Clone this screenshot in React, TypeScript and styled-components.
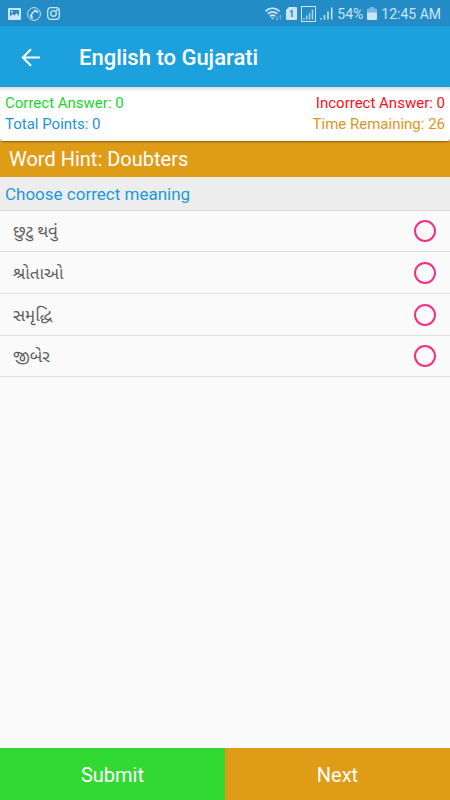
import React, { useState } from "react";
import styled, { createGlobalStyle } from "styled-components";

const GlobalStyle = createGlobalStyle`
  * { box-sizing: border-box; }
  body {
    margin: 0;
    background: #fafafa;
    font-family: Roboto, "Noto Sans", "Noto Sans Gujarati", sans-serif;
  }
`;

const Screen = styled.div`
  display: flex;
  flex-direction: column;
  min-height: 100vh;
`;

const StatusBar = styled.div`
  display: flex;
  align-items: center;
  justify-content: space-between;
  height: 26px;
  padding: 1px 9px 0 8px;
  background: #238cc7;
  color: #cbe5f5;
  font-size: 14px;
  line-height: 24px;
`;

const StatusGroup = styled.div<{ $gap: number }>`
  display: flex;
  align-items: center;
  gap: ${(p) => p.$gap}px;
  svg { display: block; }
`;

const AppBar = styled.header`
  display: flex;
  align-items: center;
  gap: 36px;
  height: 61px;
  padding: 2px 20px 0;
  background: #1da1dc;
  color: #fff;
`;

const BackButton = styled.button`
  display: flex;
  padding: 0;
  border: 0;
  background: none;
  color: inherit;
`;

const Title = styled.h1`
  margin: 0;
  font-size: 22px;
  line-height: 28px;
  font-weight: 500;
`;

const ScoreBackdrop = styled.section`
  background: #e6e6e6;
`;

const ScoreCard = styled.div`
  position: relative;
  display: grid;
  grid-template-columns: 1fr 1fr;
  padding: 6px 5px;
  border-radius: 4px;
  background: linear-gradient(#dcdcdc, #ffffff 5px);
  box-shadow: 0 1px 2px rgba(0, 0, 0, 0.4);
  font-size: 15px;
  line-height: 21px;
`;

const Score = styled.div<{ $color: string; $end?: boolean }>`
  color: ${(p) => p.$color};
  text-align: ${(p) => (p.$end ? "right" : "left")};
`;

const Hint = styled.div`
  padding: 6px 9px;
  background: #df9c17;
  color: #fff;
  font-size: 20px;
  line-height: 24px;
`;

const Question = styled.fieldset`
  margin: 0;
  padding: 0;
  border: 0;
  min-width: 0;
`;

const Prompt = styled.legend`
  width: 100%;
  padding: 5px 5px 4px;
  border-bottom: 1px solid #dedede;
  background: #ededed;
  color: #1d9ad6;
  font-size: 17px;
  line-height: 24px;
`;

const Option = styled.label`
  display: flex;
  align-items: center;
  justify-content: space-between;
  height: 42px;
  padding: 0 14px 0 13px;
  border-bottom: 1px solid #dfdfdf;
  color: #606060;
  font-size: 17px;
  line-height: 24px;

  &:first-of-type,
  &:last-of-type { height: 41px; }
`;

const Radio = styled.input`
  appearance: none;
  width: 22px;
  height: 22px;
  margin: 0;
  border: 2px solid #f72f82;
  border-radius: 50%;
  &:checked {
    background: radial-gradient(#f72f82 5px, transparent 6px);
  }
`;

const Actions = styled.footer`
  display: grid;
  grid-template-columns: 1fr 1fr;
  margin-top: auto;
`;

const Action = styled.button<{ $color: string }>`
  height: 52px;
  padding: 2px 0 0;
  border: 0;
  background: ${(p) => p.$color};
  color: #fff;
  font-family: inherit;
  font-size: 20px;
  line-height: 24px;
`;

const PictureIcon = () => (
  <svg width="13" height="12" viewBox="0 0 13 12" fill="none">
    <rect width="13" height="12" rx="1" fill="currentColor" />
    <path d="M2 2h9v6L8.5 5 6.5 7.5 4.5 6 2 8.5z" fill="#238cc7" />
    <circle cx="4" cy="3.8" r="1" fill="currentColor" />
  </svg>
);

const CallIcon = () => (
  <svg width="14" height="14" viewBox="0 0 14 14" fill="none" stroke="currentColor">
    <circle cx="7" cy="7" r="6.4" strokeWidth="1" />
    <path d="M4.3 10.7C3.5 7.2 6.3 3.8 10 3.7" strokeWidth="1.6" />
    <path d="M3.9 8.5l1.2 2.2M8 3.5l2.4 1.4" strokeWidth="2" strokeLinecap="round" />
  </svg>
);

const CameraIcon = () => (
  <svg width="13" height="13" viewBox="0 0 13 13" fill="none" stroke="currentColor" strokeWidth="1.3">
    <rect x=".7" y=".7" width="11.6" height="11.6" rx="3" />
    <circle cx="6.5" cy="6.5" r="2.8" />
    <circle cx="10" cy="3" r=".4" />
  </svg>
);

const WifiIcon = () => (
  <svg width="17" height="14" viewBox="0 0 17 14" fill="none" stroke="currentColor">
    <path d="M.5 4.3C4.3.2 10.7.2 14.5 4.3M2.8 6.8c2.6-2.7 6.8-2.7 9.4 0M5 9.3c1.4-1.5 3.6-1.5 5 0" strokeWidth="1.7" />
    <path d="M5.8 10.4h3.4L7.5 12.6z" fill="currentColor" stroke="none" />
    <path d="M12 9v4M10.8 11.8l1.2 1.2 1.2-1.2M15.3 12.5V8.5M14.1 9.7l1.2-1.2 1.2 1.2" strokeWidth=".8" opacity=".6" />
  </svg>
);

const SimIcon = () => (
  <svg width="11" height="13" viewBox="0 0 11 13" fill="none">
    <path d="M3 0h7a1 1 0 011 1v11a1 1 0 01-1 1H1a1 1 0 01-1-1V3z" fill="currentColor" />
    <path d="M4.2 4.8L6 3.7V10" stroke="#238cc7" strokeWidth="1.4" />
  </svg>
);

const BoxedSignalIcon = () => (
  <svg width="15" height="16" viewBox="0 0 15 16" fill="none">
    <rect x=".5" y=".5" width="14" height="15" stroke="currentColor" />
    <path d="M3 13.5V12M5.8 13.5V9.5M8.6 13.5V7M11.5 13.5V3.5" stroke="currentColor" strokeWidth="1.5" opacity=".8" />
  </svg>
);

const SignalIcon = () => (
  <svg width="13" height="13" viewBox="0 0 13 13" fill="none">
    <path d="M1 12.5V11M4.5 12.5V8M8 12.5V4.5M11.7 12.5V.5" stroke="currentColor" strokeWidth="1.5" />
  </svg>
);

const BatteryIcon = () => (
  <svg width="10" height="13" viewBox="0 0 10 13">
    <path d="M3 0h4v1.5h2a1 1 0 011 1V6H0V2.5a1 1 0 011-1h2z" fill="currentColor" opacity=".5" />
    <path d="M0 5.5h10V12a1 1 0 01-1 1H1a1 1 0 01-1-1z" fill="currentColor" />
  </svg>
);

const BackIcon = () => (
  <svg width="23" height="22" viewBox="0 0 23 22" fill="none" stroke="currentColor" strokeWidth="2">
    <path d="M3 10.5h17M11 2.3L2.8 10.5l8.2 8.2" />
  </svg>
);

const options = ["છુટુ થવું", "શ્રોતાઓ", "સમૃદ્ધિ", "જીબેર"];

export default function App() {
  const [answer, setAnswer] = useState<string | null>(null);

  return (
    <>
      <GlobalStyle />
      <Screen>
        <StatusBar>
          <StatusGroup $gap={6}>
            <PictureIcon />
            <CallIcon />
            <CameraIcon />
          </StatusGroup>
          <StatusGroup $gap={4}>
            <WifiIcon />
            <SimIcon />
            <BoxedSignalIcon />
            <SignalIcon />
            <span>54%</span>
            <BatteryIcon />
            <span>12:45 AM</span>
          </StatusGroup>
        </StatusBar>
        <AppBar>
          <BackButton type="button" aria-label="Back">
            <BackIcon />
          </BackButton>
          <Title>English to Gujarati</Title>
        </AppBar>
        <ScoreBackdrop>
          <ScoreCard>
            <Score $color="#19d52a">Correct Answer: 0</Score>
            <Score $color="#fa0f19" $end>Incorrect Answer: 0</Score>
            <Score $color="#1d93d2">Total Points: 0</Score>
            <Score $color="#dc971b" $end>Time Remaining: 26</Score>
          </ScoreCard>
        </ScoreBackdrop>
        <Hint>Word Hint: Doubters</Hint>
        <Question>
          <Prompt>Choose correct meaning</Prompt>
          {options.map((option) => (
            <Option key={option}>
              <span lang="gu">{option}</span>
              <Radio
                type="radio"
                name="meaning"
                value={option}
                checked={answer === option}
                onChange={() => setAnswer(option)}
              />
            </Option>
          ))}
        </Question>
        <Actions>
          <Action type="button" $color="#31d932">Submit</Action>
          <Action type="button" $color="#df9c17">Next</Action>
        </Actions>
      </Screen>
    </>
  );
}
